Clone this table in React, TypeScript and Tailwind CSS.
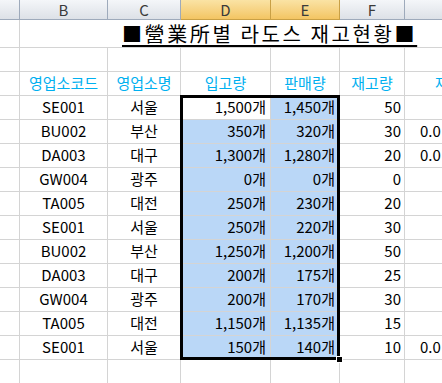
import React from 'react';

const rows = [
  { code: 'SE001', name: '서울', inQty: '1,500개', outQty: '1,450개', stock: '50', g: '' },
  { code: 'BU002', name: '부산', inQty: '350개', outQty: '320개', stock: '30', g: '0.0' },
  { code: 'DA003', name: '대구', inQty: '1,300개', outQty: '1,280개', stock: '20', g: '0.0' },
  { code: 'GW004', name: '광주', inQty: '0개', outQty: '0개', stock: '0', g: '' },
  { code: 'TA005', name: '대전', inQty: '250개', outQty: '230개', stock: '20', g: '' },
  { code: 'SE001', name: '서울', inQty: '250개', outQty: '220개', stock: '30', g: '' },
  { code: 'BU002', name: '부산', inQty: '1,250개', outQty: '1,200개', stock: '50', g: '' },
  { code: 'DA003', name: '대구', inQty: '200개', outQty: '175개', stock: '25', g: '' },
  { code: 'GW004', name: '광주', inQty: '200개', outQty: '170개', stock: '30', g: '' },
  { code: 'TA005', name: '대전', inQty: '1,150개', outQty: '1,135개', stock: '15', g: '' },
  { code: 'SE001', name: '서울', inQty: '150개', outQty: '140개', stock: '10', g: '0.0' },
];

const cell = 'border-r border-b border-[#d4d4d4] flex items-center overflow-hidden whitespace-nowrap';

const App: React.FC = () => {
  return (
    <div
      className="relative w-[442px] h-[383px] overflow-hidden bg-white text-black text-[15px]"
      style={{ fontFamily: '"Noto Sans CJK KR", "Noto Sans", sans-serif' }}
    >
      <div className="grid grid-cols-[20px_88px_73px_90px_69px_65px_80px] w-max">
        {/* Column headers */}
        <div className="h-[20px] border-r border-b border-[#9eaabb] bg-gradient-to-b from-[#f4f6f9] to-[#dde1e7]" />
        {['B', 'C'].map((c) => (
          <div key={c} className="h-[20px] border-r border-b border-[#9eaabb] bg-gradient-to-b from-[#f4f6f9] to-[#dde1e7] flex items-center justify-center text-[15px] text-[#3a3a3a] leading-none">
            {c}
          </div>
        ))}
        {['D', 'E'].map((c) => (
          <div key={c} className="h-[20px] border-r border-b border-[#c9a045] bg-gradient-to-b from-[#fae3a4] to-[#f3c562] flex items-center justify-center text-[15px] text-[#3a3a3a] leading-none">
            {c}
          </div>
        ))}
        {['F', ''].map((c, i) => (
          <div key={i} className="h-[20px] border-r border-b border-[#9eaabb] bg-gradient-to-b from-[#f4f6f9] to-[#dde1e7] flex items-center justify-center text-[15px] text-[#3a3a3a] leading-none">
            {c}
          </div>
        ))}

        {/* Row 1: title */}
        <div className={`${cell} h-[28px]`} />
        <div className={`${cell} h-[28px] col-span-6 items-end pb-[1px] pl-[102px]`}>
          <span className="text-[20px] leading-[24px] underline underline-offset-[3px] tracking-[2.6px]">■營業所별 라도스 재고현황■</span>
        </div>

        {/* Row 2: empty */}
        {Array.from({ length: 7 }).map((_, i) => (
          <div key={i} className={`${cell} h-[24px]`} />
        ))}

        {/* Row 3: field headers */}
        <div className={`${cell} h-[24px]`} />
        {['영업소코드', '영업소명', '입고량', '판매량', '재고량'].map((t) => (
          <div key={t} className={`${cell} h-[24px] justify-center text-[#00b0f0]`}>{t}</div>
        ))}
        <div className={`${cell} h-[24px] pl-[30px] text-[#00b0f0]`}>재</div>

        {/* Data rows */}
        {rows.map((r, i) => (
          <React.Fragment key={i}>
            <div className={`${cell} h-[24px]`} />
            <div className={`${cell} h-[24px] justify-center`}>{r.code}</div>
            <div className={`${cell} h-[24px] justify-center`}>{r.name}</div>
            <div className={`${cell} h-[24px] justify-end pr-[4px] ${i === 0 ? 'bg-white' : 'bg-[#bad7f7]'}`}>{r.inQty}</div>
            <div className={`${cell} h-[24px] justify-end pr-[4px] bg-[#bad7f7]`}>{r.outQty}</div>
            <div className={`${cell} h-[24px] justify-end pr-[3px]`}>{r.stock}</div>
            <div className={`${cell} h-[24px] pl-[15px]`}>{r.g}</div>
          </React.Fragment>
        ))}

        {/* Trailing empty row */}
        {Array.from({ length: 7 }).map((_, i) => (
          <div key={i} className={`${cell} h-[24px]`} />
        ))}
      </div>

      {/* Selection outline over D:E */}
      <div className="absolute left-[180px] top-[95px] w-[160px] h-[265px] border-[3px] border-black pointer-events-none" />
      <div className="absolute left-[336px] top-[356px] w-[7px] h-[7px] bg-black border border-white" />
    </div>
  );
};

export default App;
